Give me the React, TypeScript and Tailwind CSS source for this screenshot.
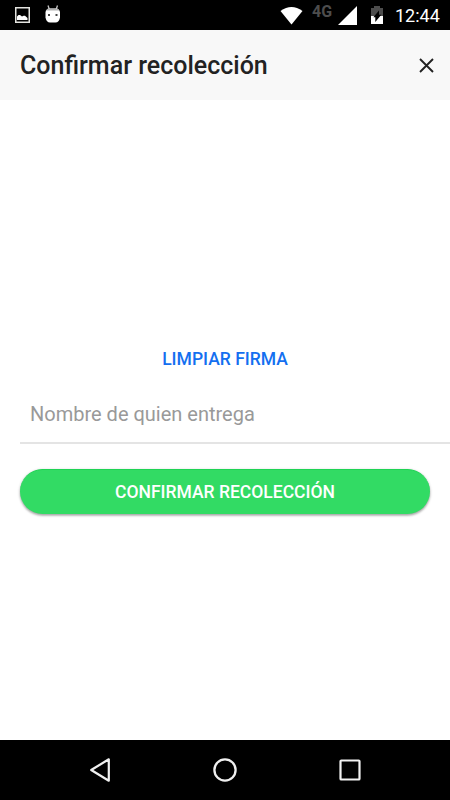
const StatusBar = () => {
  return (
    <div className="h-[30px] bg-black flex justify-between items-center pl-[15px] pr-[10px]">
      <div className="flex items-center gap-[15px]">
        <svg width="15" height="16" viewBox="0 0 15 16">
          <rect x="0.75" y="0.75" width="13.5" height="14.5" fill="none" stroke="#e4e4e0" strokeWidth="1.5" />
          <path d="M2 13V9.500l1.500-1.500h1.500l2 1.500 1.500-.8h1.500l2.500 2.300v2z" fill="#fff" />
        </svg>
        <svg className="-mt-[3px]" width="16" height="18" viewBox="0 0 16 18">
          <path d="M3 0.500l1.400 4M12.500 0.500l-1.400 4" stroke="#c4c4c4" strokeWidth="1.300" />
          <path d="M.5 7Q1.500 3.500 4 3.500h7.500Q14 3.500 15 7v5.500Q14 17.500 10.500 17.500H5Q1.500 17.500.5 12.500z" fill="#fff" />
          <path d="M1.200 5.500Q2 3.500 4 3.500h7.500Q13.500 3.500 14.300 5.500z" fill="#b0b0b0" />
          <rect x="3" y="9" width="2" height="2" fill="#444" />
          <rect x="10.500" y="9" width="2" height="2" fill="#444" />
        </svg>
      </div>
      <div className="flex items-center">
        <svg width="23" height="19" viewBox="0 0 23 19">
          <path d="M0.500 5Q11.500 -3 22.500 5L11.500 18.500z" fill="#fff" />
        </svg>
        <span className="ml-[9px] w-[22px] h-[23px] text-[16px] leading-[16px] font-bold text-[#4d4d4d]">4G</span>
        <svg className="ml-[4px]" width="19" height="19" viewBox="0 0 19 19">
          <path d="M19 0v19H0z" fill="#fff" />
        </svg>
        <svg className="ml-[14px]" width="12" height="18" viewBox="0 0 12 18">
          <path d="M0 2h3V0h6v2H12v8H0z" fill="#4d4d4d" />
          <path d="M0 10h12v8H0z" fill="#fff" />
          <path d="M8 4.500v4.300h2.300L4.300 16v-4.800H2.300z" fill="#000" />
        </svg>
        <span className="ml-[12px] mt-[2px] w-[45px] text-[18px] leading-[22px] text-white whitespace-nowrap">12:44</span>
      </div>
    </div>
  );
};

const Header = () => {
  return (
    <header className="h-[70px] bg-[#f8f8f8] flex justify-between items-center pl-5 pr-[16px]">
      <h1 className="pt-[2px] font-medium text-[25px] leading-[30px] text-[#222]">Confirmar recolección</h1>
      <button aria-label="Cerrar">
        <svg width="15" height="15" viewBox="0 0 15 15">
          <path d="M1 1l13 13M14 1L1 14" stroke="#222" strokeWidth="1.900" />
        </svg>
      </button>
    </header>
  );
};

const NavigationBar = () => {
  return (
    <div className="h-[60px] bg-black flex items-center">
      <svg className="ml-[89px]" width="22" height="26" viewBox="0 0 22 26">
        <path d="M19.800 2.300v21.400L2.200 13z" fill="none" stroke="#f0f0f0" strokeWidth="2.200" strokeLinejoin="round" />
      </svg>
      <svg className="ml-[102px]" width="24" height="24" viewBox="0 0 24 24">
        <circle cx="12" cy="12" r="10.600" fill="none" stroke="#f0f0f0" strokeWidth="2.300" />
      </svg>
      <svg className="ml-[102px]" width="22" height="22" viewBox="0 0 22 22">
        <rect x="1.500" y="1.500" width="19" height="19" rx="0.800" fill="none" stroke="#f0f0f0" strokeWidth="2.200" />
      </svg>
    </div>
  );
};

const App = () => {
  return (
    <div className="w-[450px] h-[800px] flex flex-col overflow-hidden bg-white font-[Roboto,sans-serif]">
      <StatusBar />
      <Header />
      <main className="flex-1 pt-[236px]">
        <button className="block w-full h-[45px] text-center font-medium text-[17.5px] leading-[47px] text-[#146ff0]">
          LIMPIAR FIRMA
        </button>
        <div className="ml-5 mt-[6px] h-[57px] border-b-2 border-[#e4e4e4]">
          <input
            className="block w-full h-[53px] pl-[10px] text-[20px] text-[#333] placeholder:text-[#999] outline-none"
            placeholder="Nombre de quien entrega"
          />
        </div>
        <button className="block mx-5 mt-[25px] w-[410px] h-[45px] rounded-full bg-[#32db64] border-t border-[#1fd354] text-white font-medium text-[17.5px] leading-[45px] shadow-[0_2px_2px_0_rgba(0,0,0,0.14),0_1px_3px_0_rgba(0,0,0,0.3)]">
          CONFIRMAR RECOLECCIÓN
        </button>
      </main>
      <NavigationBar />
    </div>
  );
};

export default App;
